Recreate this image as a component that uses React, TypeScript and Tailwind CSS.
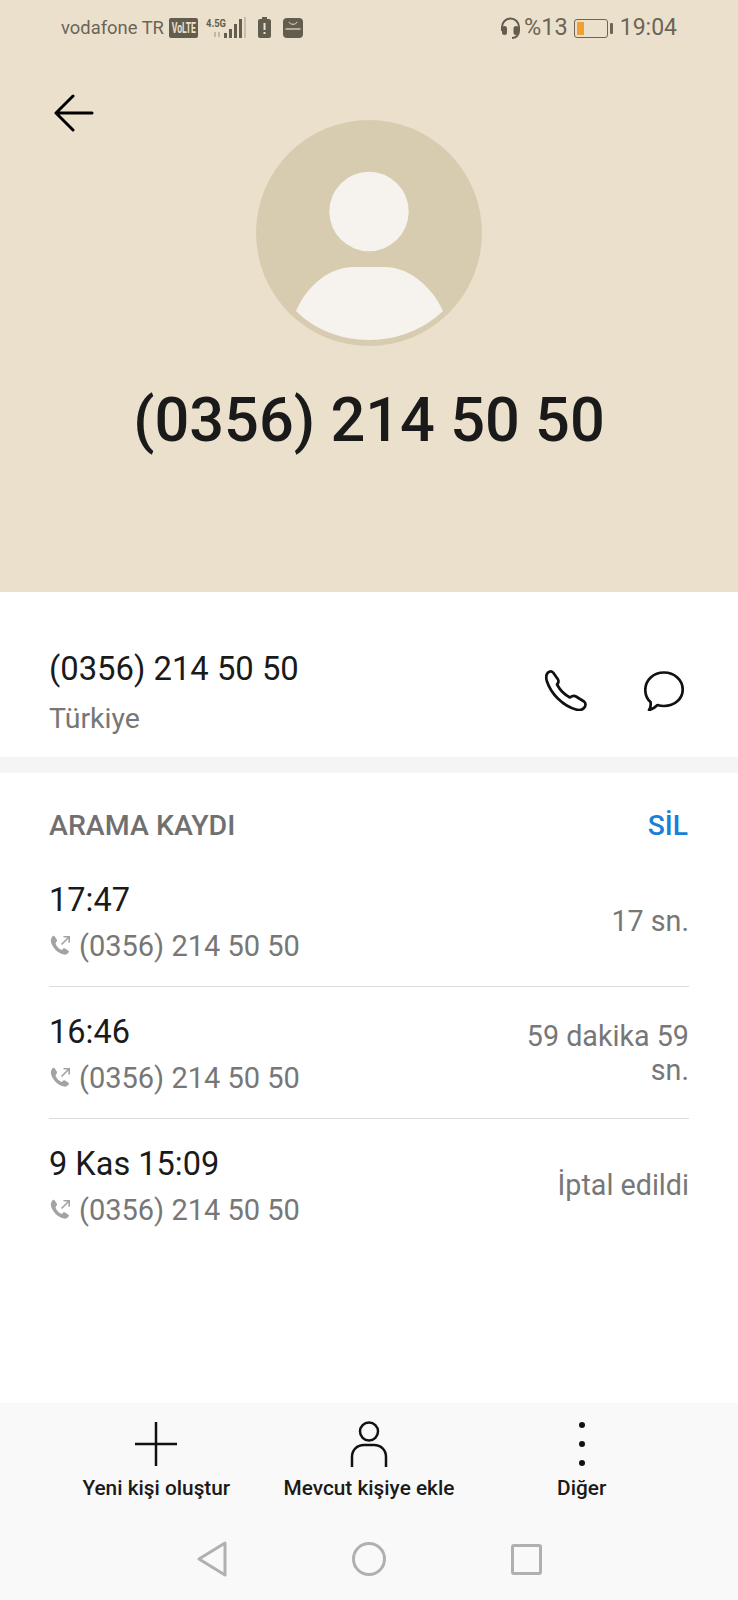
import React from 'react'

const font = { fontFamily: 'Roboto, sans-serif' }

function OutgoingCallIcon() {
  return (
    <svg width="24" height="24" viewBox="0 0 24 24" className="flex-shrink-0 text-[#a3a3a3]">
      <path
        d="M3.600 2.200c.8-.6 1.700-.4 2.200.4l2 3c.4.600.3 1.400-.2 1.900L6.500 9.400c1 3 3.300 5.300 6.400 6.500l1.200-1.200c.5-.5 1.300-.6 1.900-.2l3.200 1.900c.8.500 1 1.500.4 2.200-1 1.400-2.600 2.300-4.300 2C9.100 19.500 3.500 14 2 8 1.500 5.800 2.200 3.500 3.600 2.200z"
        fill="currentColor"
      />
      <path d="M12.500 10.500 20 3M14.500 2.800h5.700v5.700" fill="none" stroke="currentColor" strokeWidth="1.600" />
    </svg>
  )
}

function CallRow({ time, duration, last }: { time: string; duration: React.ReactNode; last?: boolean }) {
  return (
    <div className={`flex items-center justify-between h-[132px] pt-[4px] ${last ? '' : 'border-b border-[#dcdcdc]'}`}>
      <div>
        <div className="text-[32.5px] leading-[44px] text-[#1a1a1a]">{time}</div>
        <div className="flex items-center gap-[6px] mt-[2px] text-[29px] leading-[44px] text-[#777777]">
          <OutgoingCallIcon />
          <span>(0356) 214 50 50</span>
        </div>
      </div>
      <div className="text-right mb-[4px] text-[28.7px] leading-[34px] text-[#777777] w-[190px]">{duration}</div>
    </div>
  )
}

function BottomAction({ icon, label }: { icon: React.ReactNode; label: string }) {
  return (
    <div className="flex flex-col items-center">
      <div className="h-[48px] flex items-center justify-center">{icon}</div>
      <div className="mt-[6px] text-[20.8px] leading-[28px] font-medium text-[#1a1a1a] whitespace-nowrap">{label}</div>
    </div>
  )
}

export default function App() {
  return (
    <div className="w-[738px] h-[1600px] bg-white flex flex-col overflow-hidden" style={font}>
      {/* Header */}
      <div className="h-[592px] bg-[#ebe0cc] flex-shrink-0">
        <div className="flex items-center justify-between h-[56px] pl-[61px] pr-[61px] text-[#6b6558]">
          <div className="flex items-center">
            <span className="text-[18.4px]">vodafone TR</span>
            <span className="ml-[5px] w-[29px] h-[20px] bg-[#635d4f] text-[#ebe0cc] text-[12px] font-bold leading-[20px] rounded-[2px] flex items-center justify-center overflow-hidden">
              <span className="inline-block scale-x-[0.72] scale-y-[1.15]">VoLTE</span>
            </span>
            <svg width="40" height="21" viewBox="0 0 40 21" className="ml-[8px]">
              <text x="0" y="10" fontSize="11" fontWeight="700" fill="#635d4f" fontFamily="Roboto" textLength="20" lengthAdjust="spacingAndGlyphs">4.5G</text>
              <rect x="8" y="15" width="2" height="5" fill="#c2b9a5" />
              <rect x="12" y="15" width="2" height="5" fill="#c2b9a5" />
              <rect x="18" y="16" width="3" height="5" fill="#635d4f" />
              <rect x="23" y="12" width="3" height="9" fill="#635d4f" />
              <rect x="28" y="7" width="3" height="14" fill="#635d4f" />
              <rect x="33" y="2" width="3" height="19" fill="#635d4f" />
              <rect x="38" y="0" width="2" height="21" fill="#c9bfa9" />
            </svg>
            <svg width="13" height="21" viewBox="0 0 13 21" className="ml-[12px]">
              <rect x="4" y="0" width="5" height="2" fill="#635d4f" />
              <rect x="0" y="2" width="13" height="19" rx="2" fill="#635d4f" />
              <rect x="5.500" y="6" width="2" height="7" fill="#ebe0cc" />
              <rect x="5.500" y="15" width="2" height="2" fill="#ebe0cc" />
            </svg>
            <svg width="20" height="20" viewBox="0 0 20 20" className="ml-[12px]">
              <rect width="20" height="20" rx="4" fill="#635d4f" />
              <path d="M6 4c1 3 7 3 8 0" fill="none" stroke="#ebe0cc" strokeWidth="1" />
              <rect x="2.500" y="10" width="15" height="2" fill="#b5ad9a" />
            </svg>
          </div>
          <div className="flex items-center">
            <svg width="21" height="22" viewBox="0 0 21 22" fill="none" stroke="#635d4f" strokeWidth="2">
              <path d="M2 14V10a8.500 8.500 0 0 1 17 0v4c0 4-3 7-7 7" />
              <rect x="3" y="10" width="3" height="7" rx="1.500" fill="#635d4f" />
              <rect x="14.500" y="10" width="3" height="7" rx="1.500" fill="#635d4f" />
            </svg>
            <span className="text-[23.5px] ml-[3px]">%13</span>
            <div className="ml-[6px] w-[34px] h-[19px] rounded-[3px] border border-[#6b6558] p-[2px]">
              <div className="w-[7px] h-full bg-[#f0a030]" />
            </div>
            <div className="ml-[2px] w-[3px] h-[11px] rounded-[1px] bg-[#6b6558]" />
            <span className="text-[23px] ml-[7px]">19:04</span>
          </div>
        </div>
        <div className="relative flex flex-col items-center">
          <svg width="40" height="38" viewBox="0 0 40 38" fill="none" stroke="#000" strokeWidth="3" strokeLinecap="round" strokeLinejoin="round" className="absolute left-[54px] top-[38px]">
            <path d="M19 2 2 19l17 17M2 19h36" />
          </svg>
          <svg width="226" height="226" viewBox="0 0 226 226" className="mt-[64px]">
            <circle cx="113" cy="113" r="113" fill="#d8ccb0" />
            <circle cx="113" cy="91.500" r="39.700" fill="#f6f3ee" />
            <path d="M40 191C52 163 76 147 97 147H129C150 147 174 163 187 191C168 209 142 220 113 220C84 220 58 209 40 191z" fill="#f6f3ee" />
          </svg>
          <div className="mt-[34px] text-[61.3px] leading-[80px] font-medium text-[#1a1a1a]">(0356) 214 50 50</div>
        </div>
      </div>

      {/* Number */}
      <div className="h-[165px] flex-shrink-0 flex items-center justify-between pt-[32px] pl-[49px] pr-[54px]">
        <div className="pt-[4px]">
          <div className="text-[32.8px] leading-[44px] text-[#1a1a1a]">(0356) 214 50 50</div>
          <div className="mt-[8px] text-[28.5px] leading-[40px] text-[#777777]">Türkiye</div>
        </div>
        <div className="flex items-center gap-[57px]">
          <svg width="42" height="41" viewBox="0 0 42 41" fill="none" stroke="#111" strokeWidth="2.700" strokeLinejoin="round">
            <path d="M3 2.500C5 .8 7 1 8.500 3L13 9.500C14 11.500 13.500 13 12 14.500C15 20 20 25 25 27.500C27 25.800 29 25.300 31 26.500L39 31.500C41 33 41 36 39 38C37 40 34 40.500 31 39.500C18 36 6 24 1.800 11C.8 7.500 1 4.500 3 2.500z" />
          </svg>
          <svg width="40" height="40" viewBox="0 0 40 40" fill="none" stroke="#111" strokeWidth="2.700" strokeLinejoin="round">
            <path d="M6.500 31C3 28 1.300 24 1.300 19C1.300 9 9.500 1.500 20 1.500C30.500 1.500 38.700 9 38.700 18.500C38.700 28 30.500 35 20 35C17.500 35 15.500 34.700 13.500 34C11 36.500 8 38.500 5 39C6.500 37 7 34 6.500 31z" />
          </svg>
        </div>
      </div>
      <div className="h-[16px] bg-[#f5f5f5] flex-shrink-0" />

      {/* Call log */}
      <div className="flex-1 px-[49px]">
        <div className="flex items-center justify-between h-[82px] pt-[24px] pr-[1px]">
          <span className="text-[28.5px] font-medium text-[#707070]">ARAMA KAYDI</span>
          <span className="text-[28.2px] font-medium text-[#1a7fd6]">SİL</span>
        </div>
        <CallRow time="17:47" duration="17 sn." />
        <CallRow time="16:46" duration={<>59 dakika 59<br />sn.</>} />
        <CallRow time="9 Kas 15:09" duration="İptal edildi" last />
      </div>

      {/* Actions */}
      <div className="h-[197px] bg-[#f9f9f9] flex-shrink-0 flex flex-col">
        <div className="grid grid-cols-3 pl-[50px] pr-[50px] pt-[17px]">
          <BottomAction
            label="Yeni kişi oluştur"
            icon={<svg width="42" height="44" viewBox="0 0 42 44" stroke="#111" strokeWidth="2.500"><path d="M21 0v44M0 22h42" /></svg>}
          />
          <BottomAction
            label="Mevcut kişiye ekle"
            icon={<svg width="38" height="46" viewBox="0 0 38 46" fill="none" stroke="#111" strokeWidth="2.500"><circle cx="19" cy="10.500" r="9" /><path d="M2 46V36c0-7 5-12 12-12h10c7 0 12 5 12 12v10" /></svg>}
          />
          <BottomAction
            label="Diğer"
            icon={<svg width="8" height="44" viewBox="0 0 8 44" fill="#111"><circle cx="4" cy="3" r="3" /><circle cx="4" cy="22" r="3" /><circle cx="4" cy="41" r="3" /></svg>}
          />
        </div>
        <div className="flex items-center justify-center gap-[125px] mt-[39px]">
          <svg width="30" height="36" viewBox="0 0 30 36" fill="none" stroke="#b0b0b0" strokeWidth="3" strokeLinejoin="round"><path d="M28 2v32L2 18z" /></svg>
          <svg width="34" height="34" viewBox="0 0 34 34" fill="none" stroke="#b0b0b0" strokeWidth="3"><circle cx="17" cy="17" r="15.500" /></svg>
          <svg width="31" height="31" viewBox="0 0 31 31" fill="none" stroke="#b0b0b0" strokeWidth="3"><rect x="1.500" y="1.500" width="28" height="28" rx="1.500" /></svg>
        </div>
      </div>
    </div>
  )
}
